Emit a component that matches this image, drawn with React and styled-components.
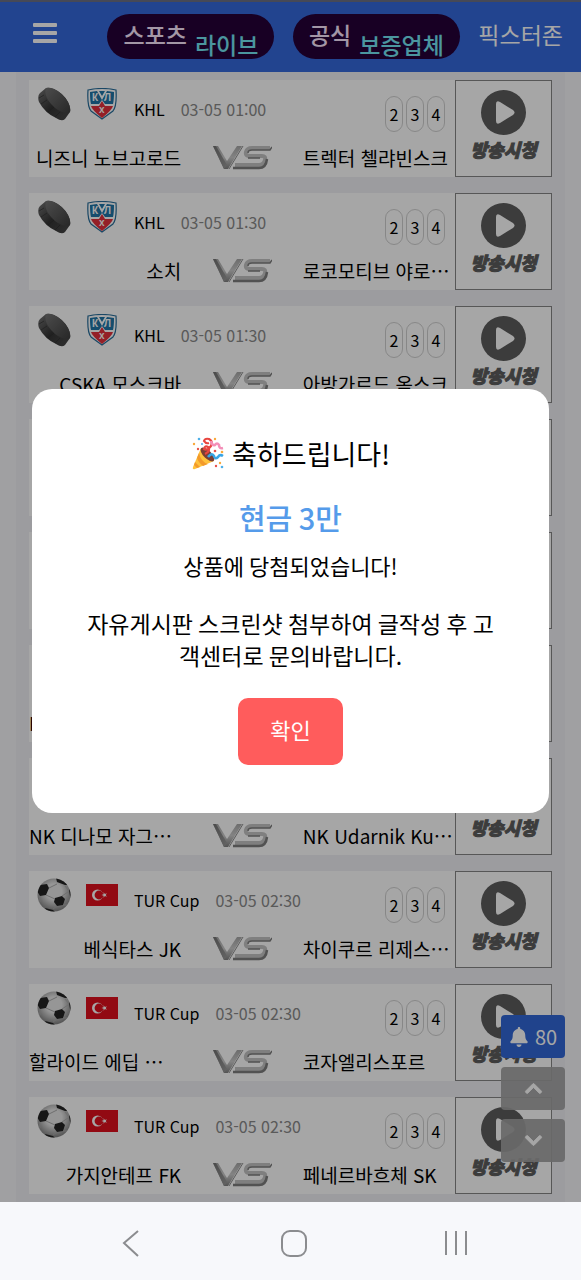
import styled, { createGlobalStyle } from "styled-components";
import { useState } from "react";
import { FaBell, FaChevronUp, FaChevronDown } from "react-icons/fa";

const GlobalStyle = createGlobalStyle`
  * {
    box-sizing: border-box;
  }
  body {
    margin: 0;
    background-color: #f6f7fa;
    font-family: "Noto Sans CJK KR", "Noto Sans", sans-serif;
  }
  button {
    font-family: inherit;
    border: none;
    padding: 0;
    cursor: pointer;
  }
`;

const Screen = styled.div`
  height: 100vh;
  display: flex;
  flex-direction: column;
`;

const View = styled.div`
  flex: 1;
  min-height: 0;
  position: relative;
  overflow: hidden;
  background-color: #f6f6f9;
`;

const Header = styled.header`
  height: 72px;
  padding: 0 18px 2px 33px;
  border-top: 2px solid #6c7186;
  background-color: #3569dc;
  display: flex;
  align-items: center;
  justify-content: space-between;
`;

const MenuButton = styled.button`
  width: 24px;
  height: 28px;
  margin-right: 32px;
  padding-bottom: 6px;
  background: none;
  display: flex;
  align-items: center;
`;

const Pill = styled.a`
  height: 45px;
  padding: 0 16px;
  border-radius: 23px;
  background-color: #250038;
  color: #fbe8ff;
  font-size: 23px;
  line-height: 40px;
  font-weight: 500;
  text-decoration: none;
  white-space: nowrap;
  display: flex;
  gap: 8px;
`;

const PillSub = styled.span`
  padding-top: 10px;
  height: 45px;
  color: #74e6f5;
`;

const HeaderLink = styled.a`
  color: #fff;
  font-size: 23px;
  line-height: 40px;
  padding-bottom: 4px;
  text-decoration: none;
  white-space: nowrap;
`;

const List = styled.main`
  margin: 0 16px;
  padding: 8px 13px;
  background-color: #f0f0f4;
  display: flex;
  flex-direction: column;
  gap: 16px;
`;

const Row = styled.article`
  height: 97px;
  background-color: #fff;
  display: flex;
`;

const Match = styled.div`
  flex: 1;
  min-width: 0;
`;

const MatchTop = styled.div`
  height: 58px;
  padding: 0 10px 0 8px;
  display: flex;
  align-items: center;
  font-size: 16px;
`;

const Icons = styled.div`
  align-self: flex-start;
  height: 48px;
  margin-right: 16px;
  display: flex;
  align-items: center;
  gap: 15px;
`;

const League = styled.span`
  margin-right: 16px;
  color: #000;
`;

const Time = styled.time`
  color: #8a8a8a;
`;

const Odds = styled.div`
  margin-left: auto;
  align-self: flex-start;
  padding-top: 16px;
  display: flex;
  gap: 3px;
`;

const Odd = styled.span`
  width: 18px;
  height: 36px;
  border: 1px solid #d0d0d0;
  border-radius: 9px;
  line-height: 35px;
  text-align: center;
`;

const Teams = styled.div`
  height: 39px;
  display: grid;
  grid-template-columns: minmax(0, 5fr) minmax(0, 4fr) minmax(0, 5fr);
  align-items: center;
  justify-items: center;
`;

const Team = styled.span`
  width: 100%;
  font-size: 19px;
  line-height: 39px;
  text-align: ${(p) => p.$align || "left"};
  white-space: nowrap;
`;

const Watch = styled.button`
  width: 97px;
  height: 97px;
  border: 1px solid #868686;
  background-color: #fff;
  color: #5c5c5c;
  display: flex;
  flex-direction: column;
  align-items: center;
  padding-top: 9px;
`;

const WatchText = styled.span`
  font-size: 18px;
  line-height: 28px;
  font-weight: 900;
  font-style: italic;
  -webkit-text-stroke: 1px #5c5c5c;
`;

const Floating = styled.div`
  position: absolute;
  right: 16px;
  bottom: 40px;
  display: flex;
  flex-direction: column;
  gap: 9px;
`;

const FloatButton = styled.button`
  width: 64px;
  height: 43px;
  border-radius: 4px;
  background-color: ${(p) => (p.$blue ? "#3268d8" : "rgba(162, 162, 162, 0.93)")};
  color: #fff;
  font-size: 20px;
  display: flex;
  align-items: center;
  justify-content: center;
  gap: 6px;
`;

const Overlay = styled.div`
  position: absolute;
  inset: 0;
  padding: 0 32px;
  background-color: rgba(0, 0, 0, 0.35);
  display: flex;
  align-items: center;
`;

const Modal = styled.div`
  width: 100%;
  padding: 48px;
  border-radius: 20px;
  background-color: #fff;
  color: #000;
  text-align: center;
`;

const Title = styled.h2`
  margin: 0;
  font-size: 27px;
  line-height: 32px;
  font-weight: 400;
  display: flex;
  justify-content: center;
  align-items: center;
  gap: 8px;
`;

const Prize = styled.p`
  margin: 28px 0 13px;
  color: #559bea;
  font-size: 29px;
  line-height: 38px;
  font-weight: 500;
`;

const Won = styled.p`
  margin: 0 0 26px;
  font-size: 22px;
  line-height: 32px;
`;

const Guide = styled.p`
  margin: 0 0 27px;
  font-size: 23px;
  line-height: 32px;
  word-break: break-all;
`;

const Confirm = styled.button`
  width: 105px;
  height: 67px;
  padding-bottom: 6px;
  border-radius: 10px;
  background-color: #ff5c5c;
  color: #fff;
  font-size: 22px;
  line-height: 32px;
  display: block;
  margin: 0 auto;
`;

const SystemBar = styled.nav`
  height: 78px;
  padding: 4px 109px 0 115px;
  background-color: #f7f8fb;
  display: flex;
  align-items: center;
  justify-content: space-between;
`;

const SystemButton = styled.button`
  width: 32px;
  height: 32px;
  background: none;
`;

const matches = [
  { sport: "puck", league: "KHL", time: "03-05 01:00", home: "니즈니 노브고로드", away: "트렉터 첼랴빈스크" },
  { sport: "puck", league: "KHL", time: "03-05 01:30", home: "소치", away: "로코모티브 야로…" },
  { sport: "puck", league: "KHL", time: "03-05 01:30", home: "CSKA 모스크바", away: "아방가르드 옴스크" },
  { sport: "puck" },
  { sport: "puck" },
  { sport: "ball", home: "NK", cut: true },
  { sport: "ball", home: "NK 디나모 자그…", away: "NK Udarnik Ku⋯", cut: true },
  { sport: "ball", league: "TUR Cup", time: "03-05 02:30", home: "베식타스 JK", away: "차이쿠르 리제스…" },
  { sport: "ball", league: "TUR Cup", time: "03-05 02:30", home: "할라이드 에딥 …", away: "코자엘리스포르", cut: true },
  { sport: "ball", league: "TUR Cup", time: "03-05 02:30", home: "가지안테프 FK", away: "페네르바흐체 SK" },
];

const Puck = () => (
  <svg width="34" height="34" viewBox="0 0 34 34">
    <defs>
      <linearGradient id="puckSide" x1="0" y1="0" x2="1" y2="1">
        <stop offset="0" stopColor="#777" />
        <stop offset="0.5" stopColor="#343434" />
        <stop offset="1" stopColor="#4a4a4a" />
      </linearGradient>
      <linearGradient id="puckTop" x1="0" y1="0" x2="1" y2="1">
        <stop offset="0" stopColor="#757575" />
        <stop offset="1" stopColor="#3d3d3d" />
      </linearGradient>
    </defs>
    <path d="M3 6 L9 1 Q12 0 17 2 Q26 6 31 15 Q34 21 33 25 L28 32 Q25 35 19 31 Q8 26 2 15 Q0 9 3 6Z" fill="url(#puckSide)" />
    <path d="M9 1 Q12 0 17 2 Q26 6 31 15 Q34 21 33 25 Q30 27 25 25 Q17 22 11 13 Q7 6 9 1Z" fill="url(#puckTop)" />
    <path d="M2 11 L7 8 M4 17 L10 13 M11 25 L17 20 M18 30 L23 25" stroke="#2c2c2c" strokeWidth="1" opacity="0.6" />
  </svg>
);

const Ball = () => (
  <svg width="34" height="34" viewBox="0 0 34 34">
    <defs>
      <radialGradient id="ballShade" cx="0.5" cy="0.4" r="0.6">
        <stop offset="0.4" stopColor="#e6e6e6" />
        <stop offset="1" stopColor="#808080" />
      </radialGradient>
      <clipPath id="ballClip">
        <circle cx="17" cy="17" r="16.5" />
      </clipPath>
    </defs>
    <circle cx="17" cy="17" r="16.5" fill="url(#ballShade)" />
    <g clipPath="url(#ballClip)">
      <path d="M3 7 L10 6 L12 10 L9 17 L3 18 L0 13Z M19 0 L25 1 L31 7 L28 7 L20 4Z M18 20 L25 18 L28 21 L26 27 L20 28 L17 24Z M8 30 L16 32 L18 34 L10 34Z M32 12 L34 10 V21 L33 18Z M0 23 L2 25 L5 29 L0 29Z" fill="#242424" />
      <path d="M12 10 L20 6 M9 17 L18 21 M28 8 L32 13 M25 18 L31 14 M20 28 L16 31 M26 27 L31 27 M3 18 L3 24" stroke="#aaa" fill="none" />
    </g>
  </svg>
);

const KhlLogo = () => (
  <svg width="32" height="32" viewBox="0 0 32 32">
    <path d="M2 2 Q16 -1 30 2 Q31 18 27 23 L16 31 L5 23 Q1 18 2 2Z" fill="#fff" stroke="#286e9b" strokeWidth="1.2" />
    <path d="M4 4 L11 3 L16 12 L21 3 L28 4 Q28 12 27 16 H19 L16 12 L13 16 H5 Q4 12 4 4Z" fill="#1f76a8" />
    <path d="M13 3 H19 L16 8Z" fill="#1f76a8" />
    <path d="M16 13 L19 18 L27 18 Q26 22 16 30 Q6 22 5 18 L13 18Z" fill="#e3303c" />
    <text x="6" y="13" fill="#fff" fontFamily="Liberation Sans" fontWeight="700" fontSize="10">К</text>
    <text x="18" y="13" fill="#fff" fontFamily="Liberation Sans" fontWeight="700" fontSize="10">Л</text>
    <text x="13" y="25" fill="#fff" fontFamily="Liberation Sans" fontWeight="700" fontSize="10">х</text>
  </svg>
);

const TurkeyFlag = () => (
  <svg width="32" height="22" viewBox="0 0 32 22">
    <rect width="32" height="22" fill="#e0101e" />
    <circle cx="11.5" cy="11" r="5.5" fill="#fff" />
    <circle cx="13" cy="11" r="4.4" fill="#e0101e" />
    <path d="M15.5 11 L17.6 10.3 L17.6 8.2 L18.9 9.9 L20.9 9.3 L19.7 11 L20.9 12.7 L18.9 12.1 L17.6 13.8 L17.6 11.7Z" fill="#fff" />
  </svg>
);

const VersusLogo = () => (
  <svg width="60" height="26" viewBox="0 0 60 26" role="img" aria-label="VS">
    <defs>
      <linearGradient id="metal" x1="0" y1="0" x2="0" y2="1">
        <stop offset="0" stopColor="#a8a8a8" />
        <stop offset="0.5" stopColor="#cacaca" />
        <stop offset="1" stopColor="#808080" />
      </linearGradient>
      <linearGradient id="metalDark" x1="0" y1="0" x2="1" y2="1">
        <stop offset="0" stopColor="#747474" />
        <stop offset="1" stopColor="#9a9a9a" />
      </linearGradient>
    </defs>
    <path d="M1 1 H6 L15 16 L25 1 H30 L16 24 H12Z" fill="url(#metal)" />
    <path d="M1 1 H4 L15 20 L12 24Z" fill="url(#metalDark)" />
    <path d="M31 1 L17 24" stroke="#8d8d8d" strokeWidth="1" />
    <path d="M58 3 H40 Q35 3 34 7 Q33 11 38 11 H50 Q54 11 53 15 Q52 20 47 20 H23" stroke="#c4c4c4" strokeWidth="4" fill="none" />
    <path d="M60 2 L58 5 H40 Q36 5 36 8 M36 13 H48" stroke="#7e7e7e" strokeWidth="1.5" fill="none" />
    <path d="M21 23 H47 Q54 23 55 14" stroke="#7e7e7e" strokeWidth="2.5" fill="none" />
  </svg>
);

const PlayCircle = () => (
  <svg width="45" height="45" viewBox="0 0 45 45">
    <circle cx="22.5" cy="22.5" r="22.5" fill="#5c5c5c" />
    <path d="M15 14 Q15 10 19 12 L32 20 Q35 22.5 32 25 L19 33 Q15 35 15 31Z" fill="#fff" />
  </svg>
);

const Popper = () => (
  <svg width="33" height="33" viewBox="0 0 33 33">
    <path d="M10 11 L2 30 Q1 33 4 32 L23 24Z" fill="#ffc23c" />
    <path d="M8 16 Q10 25 17 27 L12 29 Q7 25 6 21Z M4 25 L9 30 L6 31 L3 28Z" fill="#f39a2b" />
    <ellipse cx="16.5" cy="17.5" rx="4" ry="9" transform="rotate(-45 16.5 17.5)" fill="#7a3f35" />
    <path d="M14 17 Q20 14 17 10 Q14 8 13 12 Q16 14 20 9 Q22 4 18 2 Q14 1 13 4 Q15 7 18 6" stroke="#e8453f" strokeWidth="2.2" fill="none" />
    <path d="M20 4 Q21 9 24 8 Q26 5 28 8 Q28 12 32 11" stroke="#f48fb8" strokeWidth="2.6" fill="none" />
    <path d="M17 20 Q21 15 23 19 Q24 23 27 20 Q29 17 32 19" stroke="#39a5e5" strokeWidth="2.6" fill="none" />
    <g fill="#f9a93a">
      <circle cx="3" cy="7" r="1.2" />
      <circle cx="24" cy="2" r="1.2" />
      <circle cx="31" cy="15" r="1.3" />
      <circle cx="29" cy="26" r="1.2" />
    </g>
    <g fill="#e8514a">
      <circle cx="7" cy="12" r="1.2" />
      <circle cx="24" cy="14" r="1.3" />
      <circle cx="25" cy="29" r="1.2" />
    </g>
    <g fill="#4fb0e8">
      <circle cx="8" cy="2" r="1.3" />
      <circle cx="11" cy="7" r="1" />
      <circle cx="31" cy="30" r="1.3" />
    </g>
  </svg>
);

const App = () => {
  const [open, setOpen] = useState(true);

  return (
    <Screen>
      <GlobalStyle />
      <View>
        <Header>
          <MenuButton aria-label="메뉴">
            <svg width="24" height="20" viewBox="0 0 24 20" fill="#fff">
              <rect width="24" height="4" rx="1" />
              <rect y="8" width="24" height="4" rx="1" />
              <rect y="16" width="24" height="4" rx="1" />
            </svg>
          </MenuButton>
          <Pill href="#live">스포츠<PillSub>라이브</PillSub></Pill>
          <Pill href="#partners">공식<PillSub>보증업체</PillSub></Pill>
          <HeaderLink href="#picks">픽스터존</HeaderLink>
        </Header>

        <List lang="ko">
          {matches.map((m, i) => (
            <Row key={i}>
              <Match>
                <MatchTop>
                  <Icons>
                    {m.sport === "puck" ? <Puck /> : <Ball />}
                    {m.sport === "puck" ? <KhlLogo /> : <TurkeyFlag />}
                  </Icons>
                  <League>{m.league}</League>
                  <Time>{m.time}</Time>
                  {m.league && (
                    <Odds>
                      <Odd>2</Odd>
                      <Odd>3</Odd>
                      <Odd>4</Odd>
                    </Odds>
                  )}
                </MatchTop>
                <Teams>
                  <Team $align={m.cut ? "left" : "right"}>{m.home}</Team>
                  <VersusLogo />
                  <Team>{m.away}</Team>
                </Teams>
              </Match>
              <Watch>
                <PlayCircle />
                {m.away && <WatchText>방송시청</WatchText>}
              </Watch>
            </Row>
          ))}
        </List>

        <Floating>
          <FloatButton $blue><FaBell size={20} />80</FloatButton>
          <FloatButton aria-label="위로"><FaChevronUp size={19} stroke="#fff" strokeWidth="24" /></FloatButton>
          <FloatButton aria-label="아래로"><FaChevronDown size={19} stroke="#fff" strokeWidth="24" /></FloatButton>
        </Floating>

        {open && (
          <Overlay>
            <Modal role="dialog">
              <Title><Popper />축하드립니다!</Title>
              <Prize>현금 3만</Prize>
              <Won>상품에 당첨되었습니다!</Won>
              <Guide>자유게시판 스크린샷 첨부하여 글작성 후 고객센터로 문의바랍니다.</Guide>
              <Confirm onClick={() => setOpen(false)}>확인</Confirm>
            </Modal>
          </Overlay>
        )}
      </View>

      <SystemBar>
        <SystemButton aria-label="뒤로">
          <svg width="32" height="32" viewBox="0 0 32 32" fill="none" stroke="#8b8c8f" strokeWidth="2">
            <path d="M23 4 L9 16 L23 29" />
          </svg>
        </SystemButton>
        <SystemButton aria-label="홈">
          <svg width="32" height="32" viewBox="0 0 32 32" fill="none" stroke="#8b8c8f" strokeWidth="2">
            <rect x="4" y="4" width="24" height="25" rx="8" />
          </svg>
        </SystemButton>
        <SystemButton aria-label="최근 앱">
          <svg width="32" height="32" viewBox="0 0 32 32" stroke="#8b8c8f" strokeWidth="2">
            <path d="M6 4 V28 M16 4 V28 M26 4 V28" />
          </svg>
        </SystemButton>
      </SystemBar>
    </Screen>
  );
};

export default App;
